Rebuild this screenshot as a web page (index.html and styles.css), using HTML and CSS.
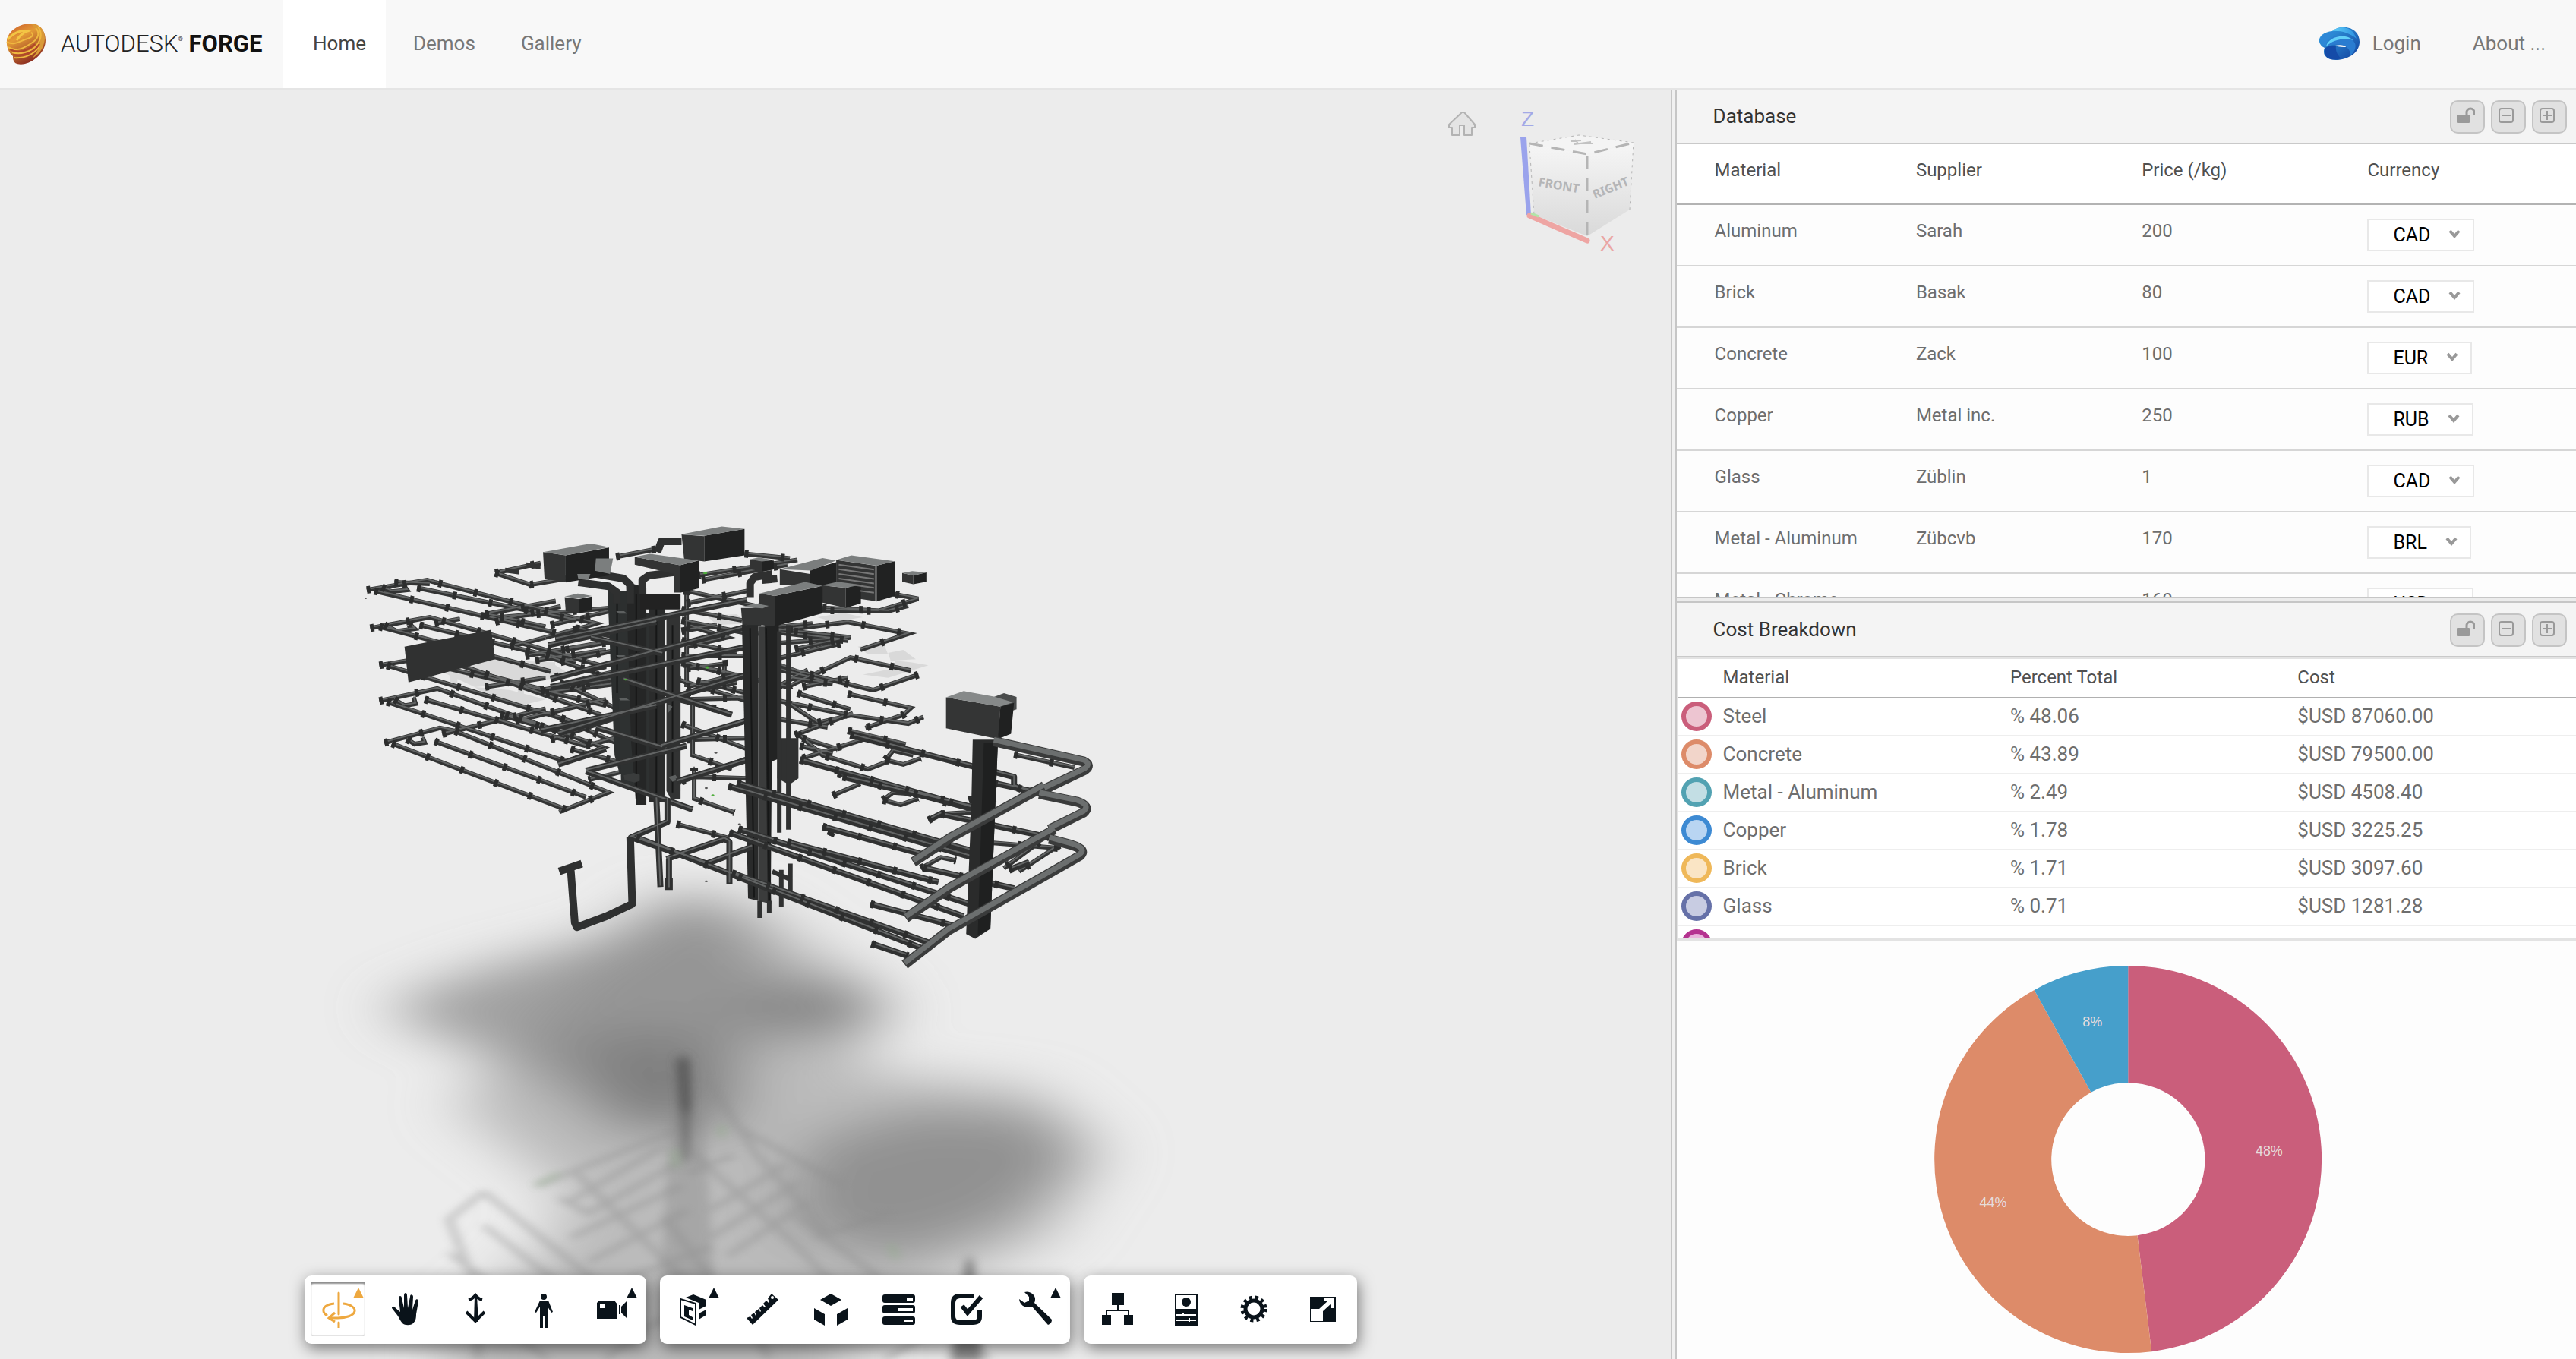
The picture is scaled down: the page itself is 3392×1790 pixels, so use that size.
FILE: index.html
```html
<!DOCTYPE html>
<html lang="en">
<head>
<meta charset="utf-8">
<meta name="viewport" content="width=device-width, initial-scale=1">
<title>Autodesk Forge</title>
<link rel="stylesheet" href="styles.css">
</head>
<body>
<svg class="defs" aria-hidden="true">
  <symbol id="i-unlock" viewBox="0 0 24 24"><rect x="0" y="11" width="17" height="11" rx="1" fill="currentColor"/><path d="M13 12V8a5 5 0 0 1 10 0v4" fill="none" stroke="currentColor" stroke-width="3"/></symbol>
  <symbol id="i-minus" viewBox="0 0 24 24"><rect x="2" y="3" width="18" height="18" rx="3" fill="none" stroke="currentColor" stroke-width="2"/><path d="M5 12h12" stroke="currentColor" stroke-width="2"/></symbol>
  <symbol id="i-plus" viewBox="0 0 24 24"><rect x="2" y="3" width="18" height="18" rx="3" fill="none" stroke="currentColor" stroke-width="2"/><path d="M5 12h12M11 6v12" stroke="currentColor" stroke-width="2"/></symbol>
  <symbol id="i-chev" viewBox="0 0 16 12"><path d="M2 2l6 7 6-7" fill="none" stroke="currentColor" stroke-width="4"/></symbol>
</svg>

<header class="top">
  <a class="brand" href="#">
    <svg class="brand-mark" viewBox="0 0 52 54" aria-hidden="true">
      <defs><linearGradient id="lg" x1="0" y1="0" x2=".5" y2="1"><stop offset="0" stop-color="#c9552a"/><stop offset=".4" stop-color="#e39a36"/><stop offset="1" stop-color="#8e2f22"/></linearGradient></defs>
      <path d="M33 0C45 0 52 10 52 22c0 15-14 28-27 31-5 1-9 1-13-1-3-3-3-6-3-9C4 39 0 31 1 22 3 9 18 0 33 0z" fill="url(#lg)"/>
      <path d="M33 1C44 1 51 9 51 20 50 33 42 42 34 46 42 37 46 28 44 19 42 10 38 4 33 1z" fill="#d99a38"/>
      <path d="M1 24C10 30 20 22 28 20c7-2 9-6 5-8M3 31c10 7 21 1 30-5 10-6 12-14 6-20M8 38c10 3 24 0 32-9 7-9 7-18 2-25M10 45c14 1 28-4 34-16" fill="none" stroke="#efb840" stroke-width="2"/>
      <path d="M2 21C10 12 20 8 28 10c-6 2-10 6-14 12" fill="none" stroke="#f3c544" stroke-width="3"/>
      <path d="M5 34c12 6 24 1 33-7M9 41c14 3 28-3 35-14" fill="none" stroke="#b2462a" stroke-width="2"/>
    </svg>
    <span class="brand-text"><span class="brand-light">AUTODESK</span><sup>®</sup> <b>FORGE</b></span>
  </a>
  <nav class="nav">
    <a class="on" href="#">Home</a>
    <a href="#">Demos</a>
    <a href="#">Gallery</a>
  </nav>
  <nav class="nav-right">
    <a class="login" href="#">
      <svg class="login-mark" viewBox="0 0 54 44" aria-hidden="true">
        <defs><linearGradient id="bl" x1="0" y1="0" x2="1" y2="1"><stop offset="0" stop-color="#35a6e8"/><stop offset="1" stop-color="#123f9c"/></linearGradient><linearGradient id="bt" x1="0" y1="0" x2="1" y2="0"><stop offset="0" stop-color="#62d0f8"/><stop offset="1" stop-color="#2b8fe0"/></linearGradient></defs>
        <path d="M17 6C28-4 53 0 53 20c0 15-16 24-31 24C12 44 6 39 6 34c0-2 0-4 1-6C-5 22-2 8 17 6z" fill="url(#bl)"/>
        <path d="M17 6C28-3 44 0 49 16 40 8 27 5 17 6z" fill="url(#bt)"/>
        <path d="M1 20C0 10 12 6 22 7 14 11 9 18 9 26 5 25 2 23 1 20z" fill="#2d87d6"/>
        <path d="M9 26C11 10 38 6 47 22c2 6-1 12-6 16 0-12-12-19-32-12z" fill="#2a7cd0"/>
        <path d="M9 26C12 13 34 8 45 18 33 14 19 17 9 26z" fill="#62d0f8"/>
        <path d="M7 29c4-4 9-5 15-4-1 7 2 13 7 17-12 3-24 1-22-13z" fill="#154ba8"/>
        <path d="M21 25c6-2 14 0 14 2-4 0-9 0-14-2z" fill="#f8f8f8"/>
      </svg>
      Login</a>
    <a href="#">About ...</a>
  </nav>
</header>

<main class="work">
  <section class="viewer" aria-label="Model viewer">
    <svg class="scene" viewBox="0 118 2200 1672" preserveAspectRatio="xMidYMax slice" aria-hidden="true">
      <defs>
        <filter id="b1" x="-40%" y="-40%" width="180%" height="180%"><feGaussianBlur stdDeviation="58 70"/></filter>
        <filter id="b2" x="-30%" y="-30%" width="160%" height="160%"><feGaussianBlur stdDeviation="8 12"/></filter>
        <filter id="b3" x="-300%" y="-30%" width="700%" height="160%"><feGaussianBlur stdDeviation="8 16"/></filter>
      </defs>

      <!-- ground shadow -->
      <g transform="translate(400 1160) scale(.7653 .4018)">
        <g filter="url(#b1)">
          <path d="M600 60l160 0 200 260 0 300 300 60 120 200-100 300-340 260 0 300-680 0-20-250 160-250 60-200-200-300z" fill="#a8a8a8" opacity=".72"/>
          <path d="M150 400L300 290 540 170 660 30 770 160 800 320 990 350 1010 480 770 520 740 820 540 820 410 640 180 470z" fill="#858585" opacity=".72"/>
          <path d="M460 520l230-20 50 280-190 30z" fill="#707070" opacity=".6"/>
          <ellipse cx="870" cy="415" rx="110" ry="70" fill="#787878" opacity=".75"/>
          <path d="M860 860l200-110 220 30 50 140-120 200-200 120-170-100z" fill="#808080" opacity=".72"/>
        </g>
        <path d="M640 580l24 0 4 160-6 180-10 0-6-180z" fill="#505050" filter="url(#b3)" opacity=".75"/>
        <path d="M630 760h60l20 700h-100z" fill="#888" filter="url(#b3)" opacity=".4"/>
        <path d="M1140 1240l12 0 16 338-56 0z" fill="#707070" filter="url(#b3)" opacity=".8"/>
        <g filter="url(#b2)" fill="none" stroke="#8a8a8a" stroke-width="14" opacity=".42">
          <path d="M640 820L400 1000M470 960L650 1300M310 1020L560 1400M310 1020L250 1110 290 1300M250 1220L420 1460M310 1130L560 1500M440 1040L490 1090 640 930M460 1170L650 1000M490 1250L660 1080M620 870L450 1060M650 860L850 1200 950 1400M690 640L780 900 900 1150M700 1170L850 990M730 1230L870 1050M740 800L930 1000M660 960L740 900M700 1080L830 930M560 1300L700 1200M300 1568V1400L420 1568M520 1568L600 1450 760 1400 800 1568M1000 1568L1100 1460 1180 1568M850 1100L990 1300M700 1300L620 1100M880 1170L1010 1090"/>
        </g>
        <path d="M640 880v60M720 800v40M400 1000l40-40M1010 1190l10 50" stroke="#86b07c" stroke-width="12" filter="url(#b2)" opacity=".35"/>
      </g>

      <!-- building services model -->
      <g class="model" transform="translate(440 660) scale(.6633 .4082)">
        <!-- translucent fixtures -->
        <g fill="#c4c4c4" opacity=".45">
          <path d="M200 540l90-30 140 10 40 40-60 20-130 20zM1040 470l50-15 10 40-40 0zM1100 490l30-10 25 30-50 5zM1050 560l60-20 5-25 30 5 35 10-80 40zM280 600l70 10 70 30-50 20-60-20zM960 375l50-15 40 15-60 15zM740 370l60-5 20 30-60 5zM230 540h15v60h-15zM275 530h15v50h-15zM425 520h14v40h-14zM365 610h12v50h-12z"/>
        </g>
        <!-- background pipes -->
        <g class="thin"><g id="p-back">
          <path d="M700 290L870 350 1080 355 1160 315 1110 300M720 240L920 190M730 255L900 205M815 170L905 185M560 180L640 155M320 232L390 270 480 245M320 232L410 200M300 365L440 322M330 375L550 345M970 345L1100 355 1140 338"/>
          <path d="M690 385L830 430 1020 390 1140 428 1045 480M860 410L950 395M915 478L1025 440 880 415M700 400L780 440 700 470"/>
          <path d="M690 500L820 500M690 520L900 600 1025 505 1145 547M1160 560L1070 610 920 550 870 520M1005 460L850 520M930 600L1020 570"/>
          <path d="M680 575L830 650M700 640L820 635M1020 622L1145 668 1130 690 1055 732M870 640L1020 690 1140 718 1170 697M900 650L960 715 1030 690M915 755L1030 685M920 620L1025 672"/>
          <path d="M700 770L820 765M920 750L970 820 1060 865 1100 840M930 830L1065 762M1020 740L1135 785M930 765L1000 800M925 790L990 815"/>
          <path d="M700 290V600M712 640V820L790 865M715 860V960L795 1005M680 905L720 890 820 895M690 905L830 825M680 1042L785 1088"/>
          <path d="M1095 835L1130 850 1165 830M1095 835L1110 805 1150 820M1090 965L1125 980 1160 960M1090 965L1110 940 1150 945M990 950L1045 912M985 1080L990 1060"/>
          <path d="M1000 880L1300 1010M1350 818L1470 860M1400 1100L1330 1185M1440 1110L1360 1195M1285 1100L1440 1120M1205 1010L1310 1000M1165 1185L1205 1150 1235 1160"/>
          <path d="M870 460L990 445M875 540L980 585M900 570L990 590M880 600L940 545M870 700L980 730M690 420L760 400M700 540L775 525 775 555 710 530M860 420L1020 450M700 620L800 585"/>
        </g></g>
        <!-- floors, left wing -->
        <g class="thin"><g id="p-left">
          <path d="M65 287L185 255 200 262 520 395 500 405 420 440M80 290L440 425M165 280L480 385M95 278l20 14 30-5-8-18M300 365l120 40M120 262l70 5"/>
          <path d="M72 410L190 375 540 535 430 570M90 405L430 550M170 400L480 520M100 400l25 20 35-8-10-15M200 395L250 380"/>
          <path d="M90 530L200 500 530 690M105 530L480 715M200 530L540 660M300 600L420 570M450 590L640 520"/>
          <path d="M90 645L205 605 535 795 450 848M105 648L460 840M180 640L500 790M120 640l20 20 22-6-4-20M215 752L420 670M340 690L440 740"/>
          <path d="M100 780L210 732 240 742 545 940 447 1003M115 782L460 995M200 775L500 955M145 768l15 16 20-5-4-16"/>
          <path d="M580 870L505 900M430 400L560 350M440 450L600 400 640 410M460 480L600 440M450 520L620 460M480 550L620 500M500 590L620 560M470 600L600 700M560 620L640 660M450 700L560 780"/>
          <path d="M320 390L450 340M350 470L420 440M380 500L520 460M400 515L540 480M410 610L560 570M420 620L560 590M300 560L420 610M330 690L480 760M420 500L530 560M480 410L560 440M360 710L540 640M430 770L560 700M470 800L560 840M500 790L570 760"/>
          <path d="M700 330L820 290M690 350L810 385M690 450L800 490M700 600L800 560M680 640L780 680M690 720L820 800M720 580L820 620"/>
        </g></g>
        <use href="#p-back" class="hi" y="-3"/>
        <use href="#p-left" class="hi" y="-3"/>
        <use href="#p-left" class="fit"/>
        <use href="#p-back" class="fit"/>
        <!-- shafts, left core -->
        <path d="M543 290h42v590h-18l-10-60z" fill="#2c2f2f"/>
        <path d="M560 360h70v580h-30l-30-30z" fill="#2e3131"/>
        <path d="M580 260l40 20 0 700-20 0-10-200z" fill="#252626"/>
        <path d="M625 300h32v670h-32z" fill="#2b2c2c"/>
        <path d="M660 360h28v600l-18 5-10-30z" fill="#323333"/>
        <path class="edge" d="M600 300V960M640 330V960M672 400V940M562 300V620"/>
        <g fill="#222"><path d="M608 300h80v50h-80z"/></g>
        <path d="M575 885l20-8 12 6v20l-10 5-20-8z" fill="#3a3c3c"/>
        <g fill="#5d6060"><path d="M560 355l16 0 6 8-16 0zM560 497l16 0 10 8-20 0zM565 635l14 0 8 8-18 0zM662 655l10 8-8 20zM664 890l14-6 6 14-12 8z"/></g>
        <!-- riser elbows -->
        <g class="duct"><path d="M485 262L545 275 562 295V330M520 235L575 250 588 270V330M675 230L625 240 612 255V300M690 130L650 130 642 165M870 235L835 245 826 265V310M880 250L850 255"/></g>
        <!-- plant boxes -->
        <g class="left"><path d="M415 165l45 10v85l-42-8zM690 108l45 5v82l-40-8zM597 180l90 27v88l-12 0 0-60-78-30zM885 220l60 15 0 40-60 -5zM825 188l25 5v35l-23-8zM997 190l78 18v115l-50-12 0-40-28-10zM968 272l48 8v65l-48-18zM845 298l30 8v100l-35-8zM458 310l28 6v45l-26-6zM808 345h40v60h-37zM1128 232l22 8v28l-22-8zM340 215l28 6v16l-28-6zM382 198l28 6v16l-28-6z"/></g>
        <g class="right"><path d="M460 175l86-25v90l-86 22zM735 112l80-22v85l-80 20zM687 207l37-15v90l-37 14zM945 222l52-25v75l-52 5zM850 192h23v28l-23 8zM1077 208l36-14v112l-36 18zM1016 280l30-12v62l-30 15zM875 306l95-32v88l-95 42zM486 316l26-8v42l-26 12zM1150 240l26-10v30l-26 8z"/></g>
        <g class="roof"><path d="M415 165l95-28 36 12-86 26zM688 108l82-26 45 8-80 22zM597 180l30-10 96 22-36 15zM885 220l85-36 27 8-50 32zM825 188l18-6 30 8-23 5zM997 190l30-15 86 19-36 14zM968 272l32-12 46 10-30 10zM845 298l90-37 35 12-95 33zM458 308l26-10 28 8-26 8zM808 342l30-12 25 8-12 8zM1128 232l20-6 28 4-26 10zM520 185l34 0-6 50-30-10zM483 235l26 0-4 20-20-4z"/></g>
        <path class="slat" d="M1002 205l70 16M1002 220l70 16M1002 235l70 16M1002 250l70 16M1030 270l42 10M1045 290l27 6M1076 210V322"/>
        <path d="M140 470l172-55 8 95-172 75z" fill="#303131"/>
        <!-- mains running in front of the core -->
        <g class="mid"><g id="p-front">
          <path d="M440 445L820 318M425 465L640 390M430 575L820 405M430 600L820 470M445 750L820 560M650 790L820 708M680 905L820 835M445 850L540 800M500 870L700 790M500 872L712 995M520 730L652 795M510 440L652 492M575 575L790 690M410 740L640 660"/>
        </g></g>
        <use href="#p-front" class="hi" y="-3"/>
        <!-- central riser -->
        <path d="M810 400h32v890l-20-8z" fill="#292a2a"/>
        <path d="M842 405h16l10 895-26-10z" fill="#3b3c3c"/>
        <path d="M855 405l28-5 2 430-16 10-2 460-6 0z" fill="#222323"/>
        <path class="edge" d="M826 410L834 1280M858 410L864 1290"/>
        <path d="M882 765l40 0v130l-18 20-24-20z" fill="#303131"/>
        <g class="riser"><path d="M884 420V1070M902 400V1060M888 1190V1310M906 1170V1270M845 1290V1345M864 1290V1330M870 1195L905 1220"/></g>
        <!-- lower loop -->
        <g class="mid"><g id="p-loop"><path d="M640 960L648 1245M662 960V1035L590 1085 740 1170 830 1115M665 1155V1250M660 1155L775 1090 785 1100V1235"/></g></g>
        <g class="duct"><path d="M588 1085L592 1300 540 1340 482 1375 478 1360 470 1190M447 1195L492 1170M665 1215V1255"/></g>
        <!-- right wing lines -->
        <g class="mid"><g id="p-right">
          <path d="M1025 755L1350 890 1350 920 1380 940M925 835L1300 1005M1010 890L1300 1000M1310 910L1440 955M1205 1010L1420 1085"/>
          <path d="M783 920L1300 1165M800 910L1290 1140M970 1050L1180 1145M1180 1030L1210 1005M1270 1090L1300 1070"/>
          <path d="M785 1070L1250 1340M803 1058L1280 1310M900 1100L1200 1230M1170 1183L1350 1250M1065 1300L1230 1370"/>
          <path d="M600 1085L1170 1445M790 1200L1190 1430M1067 1428L1140 1468M1260 965L1300 945 1310 975M1340 1190L1380 1165"/>
        </g></g>
        <use href="#p-loop" class="hi" y="-4"/>
        <use href="#p-right" class="hi" y="-4"/>
        <use href="#p-right" class="fit"/>
        <!-- right tower -->
        <path d="M1268 770l50 0-15 610-30 32-18-15 10-400z" fill="#2a2b2b"/>
        <path d="M1290 780l28 0-15 600-25 20z" fill="#1f2020"/>
        <path d="M1305 635l25-15 25 12 0 40-20 10z" fill="#4a4c4c"/>
        <path d="M1215 633l108 30-4 105-104-35z" fill="#343535"/>
        <path d="M1323 663l27-12-6 100-26 17z" fill="#202121"/>
        <path d="M1215 633l35-20 60 18 38 18-26 14z" fill="#868989"/>
        <g class="big"><g id="p-big"><path d="M1310 775L1488 840Q1504 852 1490 868L1410 930M1400 945L1475 970Q1502 985 1488 1005L1420 1060M1420 1090L1465 1110Q1495 1125 1480 1145L1405 1215M1410 920L1225 1085 1150 1165M1430 1060L1225 1245 1135 1345M1405 1215L1220 1385 1133 1495"/></g></g>
        <use href="#p-big" class="big-hi" y="-5"/>
        <g fill="#4fae3d"><circle cx="737" cy="232" r="4"/><circle cx="741" cy="537" r="4"/><circle cx="579" cy="576" r="3"/><circle cx="752" cy="949" r="3"/></g>
        <g fill="#555"><circle cx="739" cy="1227" r="3"/><circle cx="739" cy="926" r="3"/><circle cx="758" cy="812" r="3"/><circle cx="63" cy="314" r="2"/><circle cx="805" cy="1043" r="3"/></g>
      </g>
    </svg>

    <div class="cube-area">
      <button class="home" aria-label="Home view">
        <svg viewBox="0 0 38 34" aria-hidden="true"><path d="M19 2L2 18v4h4v10h10V19h6v13h10V22h4v-4L22 2z" fill="#e4e4e4" stroke="#b3b3b3" stroke-width="2" stroke-linejoin="round"/></svg>
      </button>
      <svg class="cube" viewBox="0 0 156 200" role="img" aria-label="View orientation">
        <defs><linearGradient id="cf" x1="0" y1="0" x2="0" y2="1"><stop offset="0" stop-color="#f6f6f6"/><stop offset="1" stop-color="#d9d9d9"/></linearGradient></defs>
        <path d="M88 163l56-38-12-2-48 34z" fill="#c2c2c2"/>
        <path d="M12 44l76 14v108L18 138z" fill="url(#cf)"/>
        <path d="M88 58l61-15-5 88-56 35z" fill="url(#cf)"/>
        <path d="M12 44l65-11 72 10-61 15z" fill="#f4f4f4"/>
        <path d="M12 44l76 14 61-15M88 60v104" fill="none" stroke="#b5b5b5" stroke-width="3" stroke-dasharray="18 11"/>
        <path d="M12 44l65-11 72 10-5 88M12 46l6 92" fill="none" stroke="#b5b5b5" stroke-width="1" stroke-dasharray="3 5"/>
        <path d="M66 41l14-1M71 45l22-3M82 44l14 0M72 39l4 5" stroke="#c2c2c2" stroke-width="2"/>
        <path d="M0 36h8l6 102H8z" fill="#9aa3ec"/>
        <path d="M12 139L88 172" stroke="#eea5a3" stroke-width="7" stroke-linecap="round"/>
        <path d="M14 136l10 4" stroke="#b3e4a8" stroke-width="3"/>
        <text class="face" x="23" y="100" transform="rotate(10 23 100)">FRONT</text>
        <text class="face" x="98" y="117" transform="rotate(-22 98 117)">RIGHT</text>
        <text class="axis" x="1" y="21" fill="#a3a9e6">Z</text>
        <text class="axis" x="105" y="185" fill="#eaa6a4">X</text>
      </svg>
    </div>

    <div class="toolbar" role="toolbar" aria-label="Viewer tools">
      <div class="group">
        <button class="tool active" aria-label="Orbit"><i class="more"></i><svg viewBox="0 0 48 48"><path d="M24 2v28M24 41v7" stroke="currentColor" stroke-width="3" stroke-linecap="round"/><path d="M18 16C8 17 3 21 4 26c0 2 2 4 5 6M30 16c10 1 16 6 15 10-1 6-12 9-22 9H12M19 28l-8 7 8 5" fill="none" stroke="currentColor" stroke-width="3"/></svg></button>
        <button class="tool" aria-label="Pan"><svg viewBox="0 0 48 48"><path d="M18 42c-3-3-4-7-7-11L4 22c0-3 3-3 5 0l6 5-2-18c0-4 4-4 4 0l3 13 0-17c0-4 4-4 4 0l1 17 3-15c0-4 4-3 4 0l-1 17 4-12c1-3 4-2 4 1l-3 17c0 6-1 9-4 12-3 3-11 3-14 0z" fill="currentColor"/></svg></button>
        <button class="tool" aria-label="Zoom"><svg viewBox="0 0 48 48"><path d="M23 6h3l2 34h-6z" fill="currentColor"/><path d="M15 11q5-1 9-6 4 5 9 6M12 27l12 12 12-12" fill="none" stroke="currentColor" stroke-width="4"/></svg></button>
        <button class="tool" aria-label="First person"><svg viewBox="0 0 48 48"><circle cx="24" cy="7" r="4" fill="currentColor"/><path d="M19 12h11l6 15-2 1-5-8v28h-4V32h-2v16h-4V20l-5 8-2-1z" fill="currentColor"/></svg></button>
        <button class="tool" aria-label="Camera"><i class="more"></i><svg viewBox="0 0 48 48"><path fill-rule="evenodd" d="M7 12h20l4 5v19H4V15zM8 16v6h7v-6z" fill="currentColor"/><path d="M33 18h2v12h-2zM36 20l8-8v24l-8-8z" fill="currentColor"/></svg></button>
      </div>
      <div class="group">
        <button class="tool" aria-label="Section"><i class="more"></i><svg viewBox="0 0 48 48"><path d="M13 8l10-4 17 7v8l-10 5v-9zM30 29l10-5v7l-10 6z" fill="currentColor"/><path d="M6 10l20 6v28L6 34z" fill="#fff" stroke="currentColor" stroke-width="2"/><path d="M11 18l11 4v4l-5-2v7l5 3v4l-11-5z" fill="currentColor"/></svg></button>
        <button class="tool" aria-label="Measure"><svg viewBox="0 0 48 48"><path d="M3 35l5-2 2 3 1-1-2-4 4-3 2 4 1-1-2-4 5-4 2 4 1-1-2-4 4-4 3 3 1-1-3-4 4-4 3 3 1-1-2-5 5-6 9 8L11 44z" fill="currentColor"/><circle cx="37" cy="8" r="2" fill="#fff"/></svg></button>
        <button class="tool" aria-label="Explode"><svg viewBox="0 0 48 48"><path d="M24 3l14 8-14 8-14-8zM2 22l14 8v15L2 37zM46 22l-14 8v15l14-8z" fill="currentColor"/></svg></button>
        <button class="tool" aria-label="Model browser"><svg viewBox="0 0 48 48"><rect x="2" y="4" width="43" height="11" rx="3" fill="currentColor"/><rect x="2" y="18" width="43" height="11" rx="3" fill="currentColor"/><rect x="2" y="33" width="43" height="11" rx="3" fill="currentColor"/><path d="M34 8h8v4h-8zM23 22h19v4H23zM31 37h11v3H31z" fill="#fff"/></svg></button>
        <button class="tool" aria-label="Check"><svg viewBox="0 0 48 48"><path d="M32 6H14Q5 6 5 15v18q0 8 9 8h17q9 0 9-8v-8" fill="none" stroke="currentColor" stroke-width="6"/><path d="M15 20l8 9L41 7" fill="none" stroke="#fff" stroke-width="11"/><path d="M17 19l7 9L42 7" fill="none" stroke="currentColor" stroke-width="6"/></svg></button>
        <button class="tool" aria-label="Settings tools"><i class="more"></i><svg viewBox="0 0 48 48"><path d="M9 1c6-2 13 2 14 8 0 2 0 4-1 6l23 22c0 4-2 6-5 7L19 20C13 23 3 20 2 10l7 5 6-3V7z" fill="currentColor"/></svg></button>
      </div>
      <div class="group">
        <button class="tool" aria-label="Structure"><svg viewBox="0 0 48 48"><path d="M16 2h16v16H16zM3 31h12v13H3zM32 31h12v13H32z" fill="currentColor"/><path d="M24 18v7M9 31v-6h29v6" fill="none" stroke="currentColor" stroke-width="2"/></svg></button>
        <button class="tool" aria-label="Properties"><svg viewBox="0 0 48 48"><path fill-rule="evenodd" d="M9 3h30v42H9zM11 5v18h26V5z" fill="currentColor"/><circle cx="24" cy="14" r="6" fill="currentColor"/><path d="M11 31h26M11 38h26M20 28v5M28 35v5" stroke="#fff" stroke-width="2"/></svg></button>
        <button class="tool" aria-label="Settings"><svg viewBox="0 0 48 48"><circle cx="23" cy="23" r="11" fill="none" stroke="currentColor" stroke-width="5"/><circle cx="23" cy="23" r="15" fill="none" stroke="currentColor" stroke-width="5" stroke-dasharray="4 4"/></svg></button>
        <button class="tool" aria-label="Full screen"><svg viewBox="0 0 48 48"><path d="M7 7h34v33H7z" fill="currentColor"/><path d="M8 23h11l12-11h-6V9h13v13h-3v-6L24 26v13H8z" fill="#fff"/></svg></button>
      </div>
    </div>
  </section>

  <div class="split-v" role="separator"></div>

  <aside class="side">
    <section class="panel db">
      <div class="title"><h2>Database</h2>
        <div class="acts"><button aria-label="Unlock"><svg><use href="#i-unlock"/></svg></button><button aria-label="Collapse"><svg><use href="#i-minus"/></svg></button><button aria-label="Expand"><svg><use href="#i-plus"/></svg></button></div>
      </div>
      <div class="scroll">
        <table class="materials">
          <thead><tr><th>Material</th><th>Supplier</th><th>Price (/kg)</th><th>Currency</th></tr></thead>
          <tbody>
            <tr><td>Aluminum</td><td>Sarah</td><td>200</td><td><span class="pick"><select aria-label="Currency for Aluminum"><option>CAD</option></select><svg><use href="#i-chev"/></svg></span></td></tr>
            <tr><td>Brick</td><td>Basak</td><td>80</td><td><span class="pick"><select aria-label="Currency for Brick"><option>CAD</option></select><svg><use href="#i-chev"/></svg></span></td></tr>
            <tr><td>Concrete</td><td>Zack</td><td>100</td><td><span class="pick"><select aria-label="Currency for Concrete"><option>EUR</option></select><svg><use href="#i-chev"/></svg></span></td></tr>
            <tr><td>Copper</td><td>Metal inc.</td><td>250</td><td><span class="pick"><select aria-label="Currency for Copper"><option>RUB</option></select><svg><use href="#i-chev"/></svg></span></td></tr>
            <tr><td>Glass</td><td>Züblin</td><td>1</td><td><span class="pick"><select aria-label="Currency for Glass"><option>CAD</option></select><svg><use href="#i-chev"/></svg></span></td></tr>
            <tr><td>Metal - Aluminum</td><td>Zübcvb</td><td>170</td><td><span class="pick"><select aria-label="Currency for Metal - Aluminum"><option>BRL</option></select><svg><use href="#i-chev"/></svg></span></td></tr>
            <tr><td>Metal - Chrome</td><td></td><td>160</td><td><span class="pick"><select aria-label="Currency for Metal - Chrome"><option>USD</option></select><svg><use href="#i-chev"/></svg></span></td></tr>
          </tbody>
        </table>
      </div>
    </section>

    <div class="split-h" role="separator"></div>

    <section class="panel cost">
      <div class="title"><h2>Cost Breakdown</h2>
        <div class="acts"><button aria-label="Unlock"><svg><use href="#i-unlock"/></svg></button><button aria-label="Collapse"><svg><use href="#i-minus"/></svg></button><button aria-label="Expand"><svg><use href="#i-plus"/></svg></button></div>
      </div>
      <div class="scroll legend">
        <table class="costs">
          <thead><tr><th class="dot-cell"></th><th>Material</th><th>Percent Total</th><th>Cost</th></tr></thead>
          <tbody>
            <tr><td class="dot-cell"><span class="dot steel"></span></td><td>Steel</td><td>% 48.06</td><td>$USD 87060.00</td></tr>
            <tr><td class="dot-cell"><span class="dot concrete"></span></td><td>Concrete</td><td>% 43.89</td><td>$USD 79500.00</td></tr>
            <tr><td class="dot-cell"><span class="dot aluminum"></span></td><td>Metal - Aluminum</td><td>% 2.49</td><td>$USD 4508.40</td></tr>
            <tr><td class="dot-cell"><span class="dot copper"></span></td><td>Copper</td><td>% 1.78</td><td>$USD 3225.25</td></tr>
            <tr><td class="dot-cell"><span class="dot brick"></span></td><td>Brick</td><td>% 1.71</td><td>$USD 3097.60</td></tr>
            <tr><td class="dot-cell"><span class="dot glass"></span></td><td>Glass</td><td>% 0.71</td><td>$USD 1281.28</td></tr>
            <tr><td class="dot-cell"><span class="dot chrome"></span></td><td></td><td></td><td></td></tr>
          </tbody>
        </table>
      </div>
      <div class="chart">
        <svg viewBox="0 0 1184 552" role="img" aria-label="Cost share by material">
          <path d="M594 33A255.5 255.5 0 0 1 625 542.1L606.3 388.8A101 101 0 0 0 594 187.5z" fill="#ca5e7b"/>
          <path d="M625 542.1A255.5 255.5 0 0 1 470.2 65L545.1 200.1A101 101 0 0 0 606.3 388.8z" fill="#dd8b69"/>
          <path d="M470.2 65A255.5 255.5 0 0 1 594 33V187.5A101 101 0 0 0 545.1 200.1z" fill="#469fcb"/>
          <text x="780" y="283">48%</text>
          <text x="416" y="352">44%</text>
          <text x="547" y="113">8%</text>
        </svg>
      </div>
    </section>
  </aside>
</main>
</body>
</html>
```
FILE: styles.css
```css
* { box-sizing: border-box; }

body {
  margin: 0;
  height: 100vh;
  display: flex;
  flex-direction: column;
  overflow: hidden;
  background: #ececec;
  color: #6e6e6e;
  font-family: Roboto, "Liberation Sans", sans-serif;
  font-size: 26px;
  line-height: 32px;
}

a { color: inherit; text-decoration: none; }
button { padding: 0; border: 0; background: none; color: inherit; font: inherit; }
.defs { position: absolute; width: 0; height: 0; }

/* header */
.top {
  flex: none;
  display: flex;
  height: 118px;
  border-bottom: 2px solid #e5e5e5;
  background: #f8f8f8;
  color: #777;
}
.brand {
  display: flex;
  align-items: center;
  gap: 20px;
  width: 372px;
  padding-left: 8px;
  color: #222;
}
.brand-mark { width: 52px; height: 54px; }
.brand-text { font-size: 31px; white-space: nowrap; }
.brand-light { font-weight: 300; }
.brand-text sup { font-size: 8px; line-height: 10px; vertical-align: 14px; }
.brand-text b { font-weight: 700; color: #111; }
.nav, .nav-right { display: flex; }
.nav a, .nav-right a { display: flex; align-items: center; padding: 0 24px 2px 36px; }
.nav a.on { padding: 0 26px 2px 40px; background: #fff; color: #444; }
.nav-right { margin-left: auto; padding-right: 16px; }
.nav-right .login { gap: 16px; padding-right: 32px; }
.login-mark { width: 54px; height: 44px; }

/* workspace */
.work {
  flex: 1;
  min-height: 0;
  display: grid;
  grid-template-columns: minmax(0, 65fr) 8px minmax(0, 35fr);
  grid-template-rows: minmax(0, 1fr);
}
.viewer { position: relative; overflow: hidden; background: #ececec; }
.scene { display: block; width: 100%; height: 100%; }

.model path { vector-effect: non-scaling-stroke; }
.thin { fill: none; stroke: #333434; stroke-width: 6px; }
.mid { fill: none; stroke: #303131; stroke-width: 8px; stroke-linejoin: round; }
.riser { fill: none; stroke: #303131; stroke-width: 6px; }
.hi { fill: none; stroke: #626464; stroke-width: 2px; }
.fit { fill: none; stroke: #2c2d2d; stroke-width: 10px; stroke-dasharray: 5px 43px; }
.duct { fill: none; stroke: #2f3030; stroke-width: 10px; stroke-linejoin: round; }
.big { fill: none; stroke: #3a3b3b; stroke-width: 13px; }
.big-hi { fill: none; stroke: #6c6f6f; stroke-width: 7px; }
.edge { fill: none; stroke: #161717; stroke-width: 2px; }
.slat { fill: none; stroke: #777; stroke-width: 2px; }
.left { fill: #333434; }
.right { fill: #212222; }
.roof { fill: #7b7e7e; }

.cube-area {
  position: absolute;
  top: 27px;
  right: 42px;
  display: flex;
  align-items: flex-start;
  gap: 58px;
}
.home { width: 38px; height: 36px; }
.home svg { display: block; width: 38px; height: 34px; }
.cube { width: 156px; height: 200px; overflow: visible; }
.face { font: 700 16px "Noto Sans", sans-serif; fill: #b4b5b7; }
.axis { font: 28px "Liberation Sans", sans-serif; }

.toolbar {
  position: absolute;
  right: 12px;
  bottom: 20px;
  left: 0;
  display: flex;
  justify-content: center;
  gap: 18px;
}
.group {
  display: flex;
  border-radius: 9px;
  background: #fff;
  box-shadow: 2px 6px 20px rgba(0, 0, 0, .5);
}
.tool {
  position: relative;
  display: grid;
  place-items: center;
  width: 90px;
  height: 90px;
  color: #0a131a;
}
.tool svg { width: 48px; height: 48px; }
.tool.active { color: #eea83f; }
.tool.active::before {
  content: "";
  position: absolute;
  inset: 8px 10px 10px 8px;
  border-radius: 4px;
  box-shadow: inset 0 3px 2px #8c8c8c, inset 0 0 2px #999;
}
.more {
  position: absolute;
  top: 16px;
  right: 12px;
  border: 7px solid transparent;
  border-top: 0;
  border-bottom: 14px solid currentColor;
}

/* splitters */
.split-v { border: solid #c6c6c6; border-width: 0 2px; background: #f0f0f0; }
.split-h { flex: none; height: 8px; border: solid #c6c6c6; border-width: 2px 0; background: #ececec; }

/* side panels */
.side { display: flex; flex-direction: column; min-height: 0; background: #fdfdfd; }
.panel { display: flex; flex-direction: column; min-height: 0; }
.db { flex: 67 1 0; }
.cost { flex: 100 1 0; }
.title {
  flex: none;
  display: flex;
  align-items: center;
  justify-content: space-between;
  height: 72px;
  padding: 0 12px 0 48px;
  border-bottom: 2px solid #c9c9c9;
  background: #f4f4f4;
}
h2 { margin: 0; color: #333; font-size: 26px; font-weight: 400; line-height: 32px; }
.acts { display: flex; gap: 8px; padding-top: 2px; }
.acts button {
  width: 46px;
  height: 44px;
  padding: 0 4px 4px 0;
  border: 2px solid #c4c4c4;
  border-radius: 10px;
  background: #e1e1e1;
  color: #9a9a9a;
}
.acts svg { display: block; width: 24px; height: 24px; margin: auto; }

.scroll { overflow: auto; scrollbar-width: none; min-height: 0; }
.db .scroll { flex: 1; }
table { width: 100%; border-collapse: separate; border-spacing: 0; table-layout: fixed; }
th { color: #505050; font-size: 24px; font-weight: 400; text-align: left; background: #fff; }

.materials { font-size: 24px; line-height: 28px; }
.materials th, .materials td { height: 81px; padding: 20px 0 0 18px; border-bottom: 2px solid #d6d6d6; vertical-align: top; }
.materials th { height: 80px; border-color: #b3b3b3; }
.materials th:first-child, .materials td:first-child { padding-left: 50px; }
.materials td:last-child { padding-top: 18px; }
.materials th:nth-child(-n+3) { width: 25.1%; }

.pick { position: relative; display: inline-block; color: #999; }
.pick select {
  display: block;
  height: 43px;
  margin: 0;
  padding: 0 56px 0 32px;
  border: 2px solid #e8e8e8;
  border-radius: 0;
  background: #fff;
  color: #000;
  font: 25px Roboto, sans-serif;
  appearance: none;
}
.pick svg { position: absolute; top: 14px; right: 18px; width: 16px; height: 12px; pointer-events: none; }

.legend { flex: 2 1 0; border: solid #e3e3e3; border-width: 2px 0 4px 2px; background: #fff; }
.costs th, .costs td { height: 50px; padding: 0 0 2px 1px; border-bottom: 2px solid #eee; }
.costs th { height: 52px; border-color: #b0b0b0; line-height: 28px; }
.costs th:nth-child(2), .costs th:nth-child(3) { width: 32%; }
.costs .dot-cell { width: 58px; padding: 0 0 0 4px; }
.dot { display: block; width: 40px; height: 39px; border: 6px solid; border-radius: 50%; }
.steel { border-color: #ca5e7b; background: #edc5d1; }
.concrete { border-color: #dd8b69; background: #f2d5ca; }
.aluminum { border-color: #52a2b2; background: #c3dee4; }
.copper { border-color: #3d8ad3; background: #b9d5f2; }
.brick { border-color: #efb859; background: #fae5c5; }
.glass { border-color: #6671a8; background: #c8cce2; }
.chrome { border-color: #b53390; background: #eab4dc; }

.chart { flex: 3 1 0; min-height: 0; }
.chart svg { display: block; width: 100%; height: 100%; }
.chart text { fill: #e6dcdc; font: 18px "Liberation Sans", sans-serif; text-anchor: middle; }
```
